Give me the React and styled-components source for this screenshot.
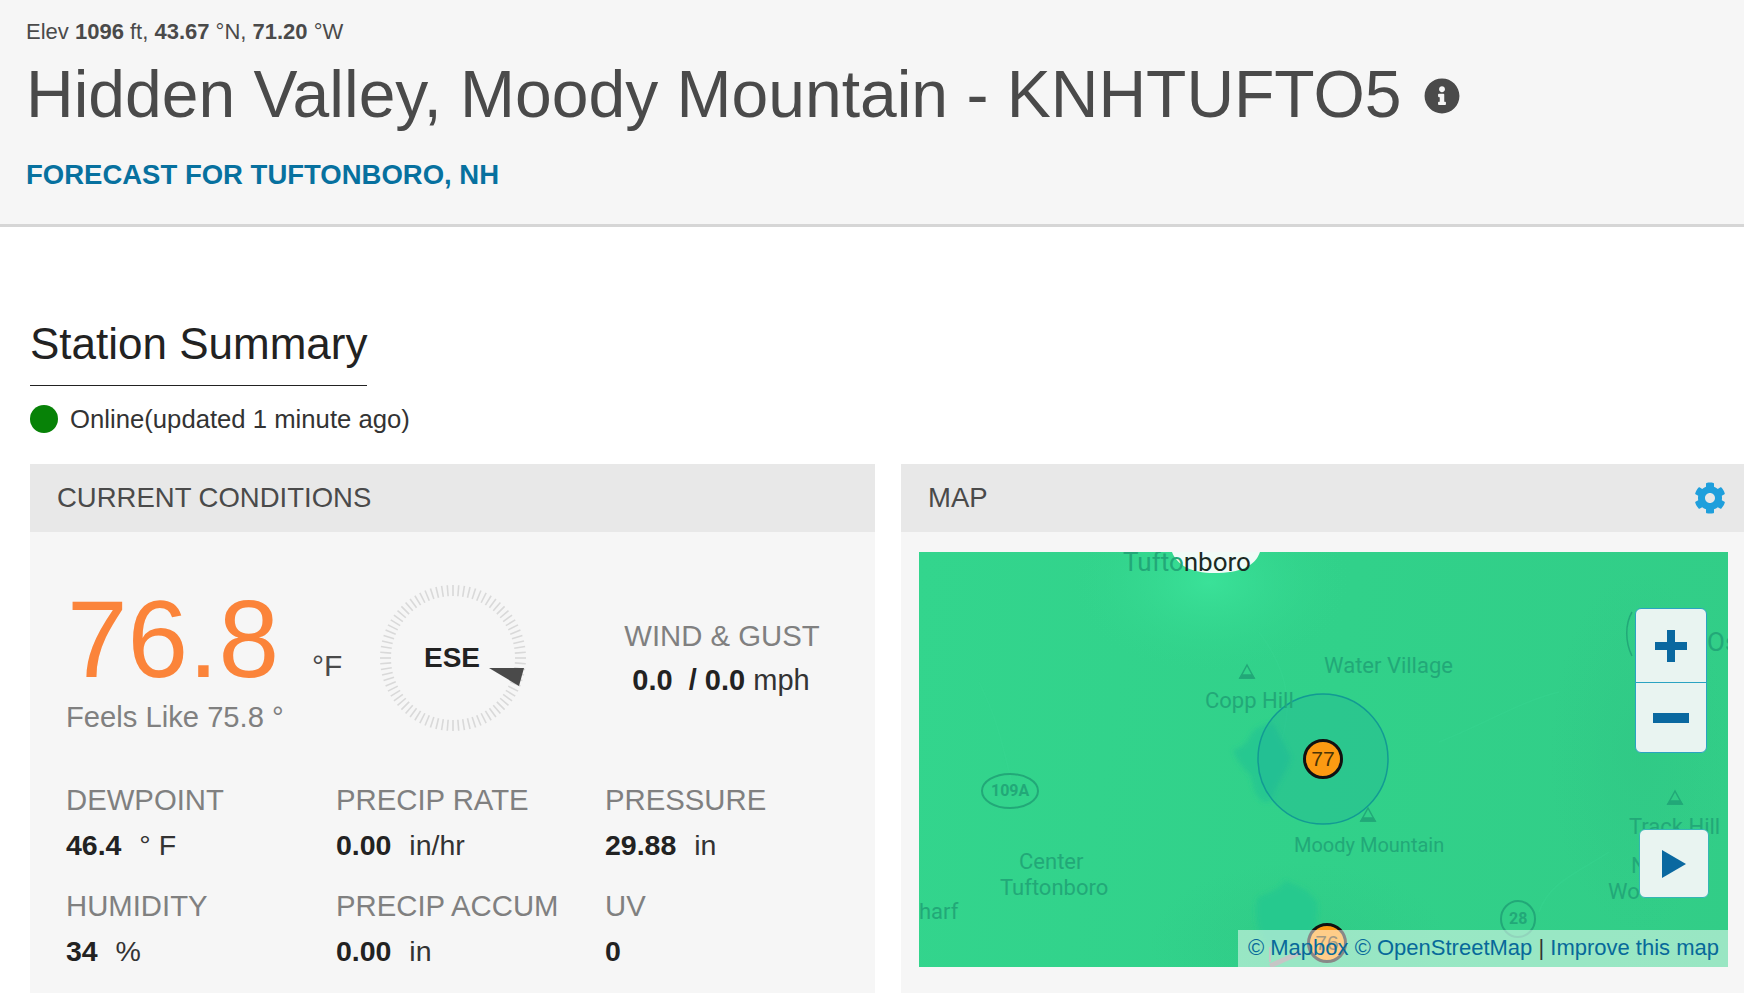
import React from "react";
import styled, { createGlobalStyle } from "styled-components";
import { FaCog, FaInfoCircle } from "react-icons/fa";

const Global = createGlobalStyle`
  html, body { margin: 0; padding: 0; background: #fff; overflow: hidden; height: 993px; }
  * { box-sizing: border-box; }
  body { font-family: "Liberation Sans", Arial, sans-serif; color: #222; }
`;

const Page = styled.div`
  width: 1744px;
  height: 993px;
  overflow: hidden;
`;
const Header = styled.header`
  height: 227px;
  background: #f6f6f6;
  border-bottom: 3px solid #d6d6d6;
  padding: 19px 26px 0;
`;
const Elev = styled.div`
  font-size: 22px;
  line-height: 26px;
  color: #4a4a4a;
  b { font-weight: 700; }
`;
const TitleRow = styled.div`
  display: flex;
  align-items: center;
  gap: 22px;
  margin-top: 11px;
`;
const Title = styled.h1`
  margin: 0;
  font-size: 66px;
  line-height: 76px;
  font-weight: 400;
  color: #4a4a4a;
`;
const InfoIcon = styled(FaInfoCircle)`
  width: 36px;
  height: 36px;
  color: #4a4a4a;
  margin-top: 3px;
`;
const Forecast = styled.a`
  display: block;
  margin-top: 27px;
  font-size: 27.5px;
  line-height: 32px;
  font-weight: 700;
  color: #07719f;
`;
const Content = styled.main`
  padding: 92px 0 0 30px;
`;
const SectionTitle = styled.h2`
  display: inline-block;
  margin: 0;
  font-size: 44px;
  line-height: 50px;
  font-weight: 400;
  color: #222;
  padding-bottom: 16px;
  border-bottom: 1px solid #222;
`;
const Status = styled.div`
  display: flex;
  align-items: center;
  gap: 12px;
  margin-top: 17px;
  height: 32px;
  font-size: 25.7px;
  color: #333;
`;
const Dot = styled.span`
  width: 28px;
  height: 28px;
  border-radius: 50%;
  background: #078207;
`;
const Panels = styled.div`
  display: grid;
  grid-template-columns: 845px 843px;
  gap: 26px;
  margin-top: 29px;
`;
const Panel = styled.section`
  background: #f6f6f6;
  height: 540px;
`;
const PanelHead = styled.div`
  height: 68px;
  background: #e8e8e8;
  padding: 0 18px 0 27px;
  display: flex;
  align-items: center;
  justify-content: space-between;
  font-size: 27.5px;
  color: #4a4a4a;
`;
const Gear = styled(FaCog)`
  width: 32px;
  height: 32px;
  color: #1f9fdc;
`;
const CondBody = styled.div`
  padding: 50px 0 0 36px;
`;
const TopRow = styled.div`
  display: flex;
  align-items: flex-start;
  height: 200px;
`;
const TempCol = styled.div`
  width: 246px;
`;
const Temp = styled.div`
  margin: 2px 0 0 1px;
  font-size: 109px;
  line-height: 110px;
  color: #fb843a;
`;
const Feels = styled.div`
  margin-top: 7px;
  font-size: 29.2px;
  line-height: 32px;
  color: #808080;
  white-space: nowrap;
`;
const Unit = styled.div`
  font-size: 30px;
  line-height: 34px;
  margin-top: 67px;
  color: #4a4a4a;
`;
const GaugeBox = styled.svg`
  flex: none;
  width: 150px;
  height: 150px;
  margin: 1px 0 0 36px;
`;
const WindCol = styled.div`
  margin-left: 96px;
  margin-top: 35px;
`;
const WindLabel = styled.div`
  font-size: 29.3px;
  line-height: 38px;
  color: #808080;
`;
const WindValue = styled.div`
  margin: 6px 0 0 8px;
  font-size: 29px;
  line-height: 38px;
  color: #333;
  white-space: pre;
  b { color: #222; }
`;
const Stats = styled.div`
  display: grid;
  grid-template-columns: 270px 269px 200px;
  grid-auto-rows: 106px;
`;
const StatLabel = styled.div`
  font-size: 29.3px;
  line-height: 36px;
  color: #808080;
  white-space: nowrap;
`;
const StatValue = styled.div`
  margin-top: 9px;
  font-size: 28.5px;
  line-height: 36px;
  color: #333;
  white-space: pre;
  b { color: #222; margin-right: 2px; }
`;
const MapBody = styled.div`
  padding: 20px 16px 0 18px;
`;
const MapFrame = styled.div`
  position: relative;
  height: 415px;
  overflow: hidden;
  background: linear-gradient(100deg, #33d58d 0%, #31d18a 50%, #32cd87 100%);
`;
const MapArt = styled.svg`
  position: absolute;
  inset: 0;
  width: 100%;
  height: 100%;
`;
const MapLabel = styled.span`
  position: absolute;
  left: ${(p) => p.$x}px;
  top: ${(p) => p.$y}px;
  transform: translateY(-50%);
  font-family: Roboto, "Liberation Sans", sans-serif;
  font-size: ${(p) => p.$size || 22}px;
  font-weight: ${(p) => p.$weight || 400};
  line-height: 1;
  white-space: nowrap;
  color: #22a878;
  em { font-style: normal; color: #1a2a24; }
`;
const Marker = styled.div`
  position: absolute;
  left: ${(p) => p.$x - 20}px;
  top: ${(p) => p.$y - 20}px;
  width: 40px;
  height: 40px;
  border-radius: 50%;
  border: 3px solid #111;
  background: #fc9a12;
  display: flex;
  align-items: center;
  justify-content: center;
  font-size: 21px;
  color: #4a3305;
`;
const ZoomBox = styled.div`
  position: absolute;
  left: 716px;
  top: 56px;
  width: 72px;
  height: 145px;
  background: #e9f4f1;
  border: 1px solid #2aa3c2;
  border-radius: 6px;
  display: grid;
  grid-template-rows: 73px 1fr;
`;
const ZoomBtn = styled.button`
  border: 0;
  padding: 0;
  background: transparent;
  display: flex;
  align-items: center;
  justify-content: center;
  & + & { border-top: 1px solid #2aa3c2; }
`;
const PlayBtn = styled.button`
  position: absolute;
  left: 720px;
  top: 277px;
  width: 70px;
  height: 69px;
  padding: 0;
  background: #e9f4f1;
  border: 1px solid #35b5b5;
  border-radius: 6px;
  display: flex;
  align-items: center;
  justify-content: center;
`;
const Attribution = styled.div`
  position: absolute;
  right: 0;
  bottom: 0;
  width: 490px;
  height: 37px;
  padding: 0 9px 2px;
  background: rgba(255, 255, 255, 0.5);
  display: flex;
  align-items: center;
  justify-content: flex-end;
  font-size: 22px;
  color: #333;
  white-space: nowrap;
  a { color: #07699a; }
`;

function Gauge() {
  const ticks = [];
  for (let i = 0; i < 80; i++) {
    const a = (i * Math.PI * 2) / 80;
    ticks.push(
      <line
        key={i}
        x1={75 + 62 * Math.cos(a)}
        y1={75 + 62 * Math.sin(a)}
        x2={75 + 73 * Math.cos(a)}
        y2={75 + 73 * Math.sin(a)}
        stroke="#d9d9d9"
        strokeWidth="1.6"
      />
    );
  }
  return (
    <GaugeBox viewBox="0 0 150 150">
      {ticks}
      <polygon points="111,85 146,85 141,103" fill="#4a4a4a" />
      <text x="74" y="84" textAnchor="middle" fontFamily="Liberation Sans" fontWeight="700" fontSize="28" fill="#222">ESE</text>
    </GaugeBox>
  );
}

const Peak = ({ x, y }) => (
  <g fill="none" stroke="#22a878" strokeWidth="1.5">
    <path d={`M${x} ${y - 7}L${x + 7} ${y + 6}H${x - 7}Z`} />
    <path d={`M${x - 5} ${y + 3}L${x + 5} ${y + 3}L${x + 7} ${y + 6}H${x - 7}Z`} fill="#22a878" />
  </g>
);

function MapDrawing() {
  return (
    <MapArt viewBox="0 0 809 415">
      <defs>
        <radialGradient id="halo" cx="50%" cy="50%" r="50%">
          <stop offset="0%" stopColor="#3be39a" stopOpacity="0.9" />
          <stop offset="100%" stopColor="#33d58d" stopOpacity="0" />
        </radialGradient>
        <radialGradient id="shade" cx="50%" cy="50%" r="50%">
          <stop offset="0%" stopColor="#2fc484" stopOpacity="0.45" />
          <stop offset="100%" stopColor="#2fc484" stopOpacity="0" />
        </radialGradient>
        <filter id="soft" x="-20%" y="-20%" width="140%" height="140%">
          <feGaussianBlur stdDeviation="2.5" />
        </filter>
      </defs>
      <ellipse cx="290" cy="30" rx="140" ry="90" fill="url(#halo)" />
      <ellipse cx="720" cy="200" rx="90" ry="180" fill="url(#shade)" />
      <ellipse cx="380" cy="390" rx="150" ry="80" fill="url(#shade)" />
      <path d="M253 0H341C336 14 322 21 295 21C272 21 258 13 253 0Z" fill="#f1fbf7" />
      <path d="M60 130C80 170 85 200 95 240M690 300C660 320 630 330 620 360M640 140C600 150 570 170 520 190M340 80C370 120 380 160 350 220" fill="none" stroke="#3ad892" strokeWidth="1.5" opacity="0.35" />
      <g filter="url(#soft)">
        <path d="M345 250C338 246 334 238 332 224C326 218 318 210 314 198C322 196 328 192 332 182C338 174 346 172 354 171L372 205C368 222 356 232 352 250Z" fill="#28c890" />
        <path d="M340 345C350 340 362 338 366 328C376 334 394 338 398 352C400 372 392 385 386 395H348C336 380 334 352 340 345Z" fill="#26c98e" />
      </g>
      <circle cx="404" cy="207" r="65" fill="#1eab9a" fillOpacity="0.28" stroke="#129a94" strokeWidth="1.5" />
      <path d="M713 60C706 72 706 90 713 104" fill="none" stroke="#22a878" strokeWidth="1.5" />
      <ellipse cx="91" cy="239" rx="28" ry="17" fill="none" stroke="#22a878" strokeWidth="2" />
      <ellipse cx="599" cy="367" rx="17" ry="18" fill="none" stroke="#22a878" strokeWidth="2" />
      <Peak x={328} y={120} />
      <Peak x={449} y={263} />
      <Peak x={756} y={246} />
      <path d="M351 414L382 400" stroke="#8c8c8c" strokeWidth="5" />
      <path d="M351 395V410" stroke="#8c8c8c" strokeWidth="2" />
    </MapArt>
  );
}

const Stat = ({ label, value, unit }) => (
  <div>
    <StatLabel>{label}</StatLabel>
    <StatValue>
      <b>{value}</b>
      {unit ? `  ${unit}` : ""}
    </StatValue>
  </div>
);

export default function App() {
  return (
    <Page>
      <Global />
      <Header>
        <Elev>
          Elev <b>1096</b> ft, <b>43.67</b> °N, <b>71.20</b> °W
        </Elev>
        <TitleRow>
          <Title>Hidden Valley, Moody Mountain - KNHTUFTO5</Title>
          <InfoIcon />
        </TitleRow>
        <Forecast>FORECAST FOR TUFTONBORO, NH</Forecast>
      </Header>
      <Content>
        <SectionTitle>Station Summary</SectionTitle>
        <Status>
          <Dot />
          Online(updated 1 minute ago)
        </Status>
        <Panels>
          <Panel>
            <PanelHead>CURRENT CONDITIONS</PanelHead>
            <CondBody>
              <TopRow>
                <TempCol>
                  <Temp>76.8</Temp>
                  <Feels>Feels Like 75.8 °</Feels>
                </TempCol>
                <Unit>°F</Unit>
                <Gauge />
                <WindCol>
                  <WindLabel>WIND &amp; GUST</WindLabel>
                  <WindValue>
                    <b>0.0  / 0.0</b> mph
                  </WindValue>
                </WindCol>
              </TopRow>
              <Stats>
                <Stat label="DEWPOINT" value="46.4" unit="° F" />
                <Stat label="PRECIP RATE" value="0.00" unit="in/hr" />
                <Stat label="PRESSURE" value="29.88" unit="in" />
                <Stat label="HUMIDITY" value="34" unit="%" />
                <Stat label="PRECIP ACCUM" value="0.00" unit="in" />
                <Stat label="UV" value="0" />
              </Stats>
            </CondBody>
          </Panel>
          <Panel>
            <PanelHead>
              MAP
              <Gear />
            </PanelHead>
            <MapBody>
              <MapFrame>
                <MapDrawing />
                <MapLabel $x={204} $y={10} $size={26}>Tufto<em>nboro</em></MapLabel>
                <MapLabel $x={405} $y={114}>Water Village</MapLabel>
                <MapLabel $x={286} $y={149}>Copp Hill</MapLabel>
                <MapLabel $x={375} $y={293} $size={20}>Moody Mountain</MapLabel>
                <MapLabel $x={100} $y={310}>Center</MapLabel>
                <MapLabel $x={81} $y={336}>Tuftonboro</MapLabel>
                <MapLabel $x={0} $y={360}>harf</MapLabel>
                <MapLabel $x={72} $y={239} $size={16} $weight={700}>109A</MapLabel>
                <MapLabel $x={590} $y={367} $size={16} $weight={700}>28</MapLabel>
                <MapLabel $x={710} $y={275}>Track Hill</MapLabel>
                <MapLabel $x={712} $y={314}>N</MapLabel>
                <MapLabel $x={689} $y={340}>Wo</MapLabel>
                <MapLabel $x={788} $y={90} $size={26}>Os</MapLabel>
                <Marker $x={404} $y={207}>77</Marker>
                <Marker $x={408} $y={391}>76</Marker>
                <ZoomBox>
                  <ZoomBtn aria-label="Zoom in">
                    <svg width="34" height="34" viewBox="0 0 34 34">
                      <path d="M13 1H21V13H33V21H21V33H13V21H1V13H13Z" fill="#0a68a0" />
                    </svg>
                  </ZoomBtn>
                  <ZoomBtn aria-label="Zoom out">
                    <svg width="36" height="12" viewBox="0 0 36 12">
                      <rect y="1" width="36" height="10" fill="#0a68a0" />
                    </svg>
                  </ZoomBtn>
                </ZoomBox>
                <PlayBtn aria-label="Play">
                  <svg width="26" height="30" viewBox="0 0 26 30">
                    <path d="M1 1L25 15L1 29Z" fill="#0a68a0" />
                  </svg>
                </PlayBtn>
                <Attribution>
                  <span>
                    <a>© Mapbox</a> <a>© OpenStreetMap</a> | <a>Improve this map</a>
                  </span>
                </Attribution>
              </MapFrame>
            </MapBody>
          </Panel>
        </Panels>
      </Content>
    </Page>
  );
}
